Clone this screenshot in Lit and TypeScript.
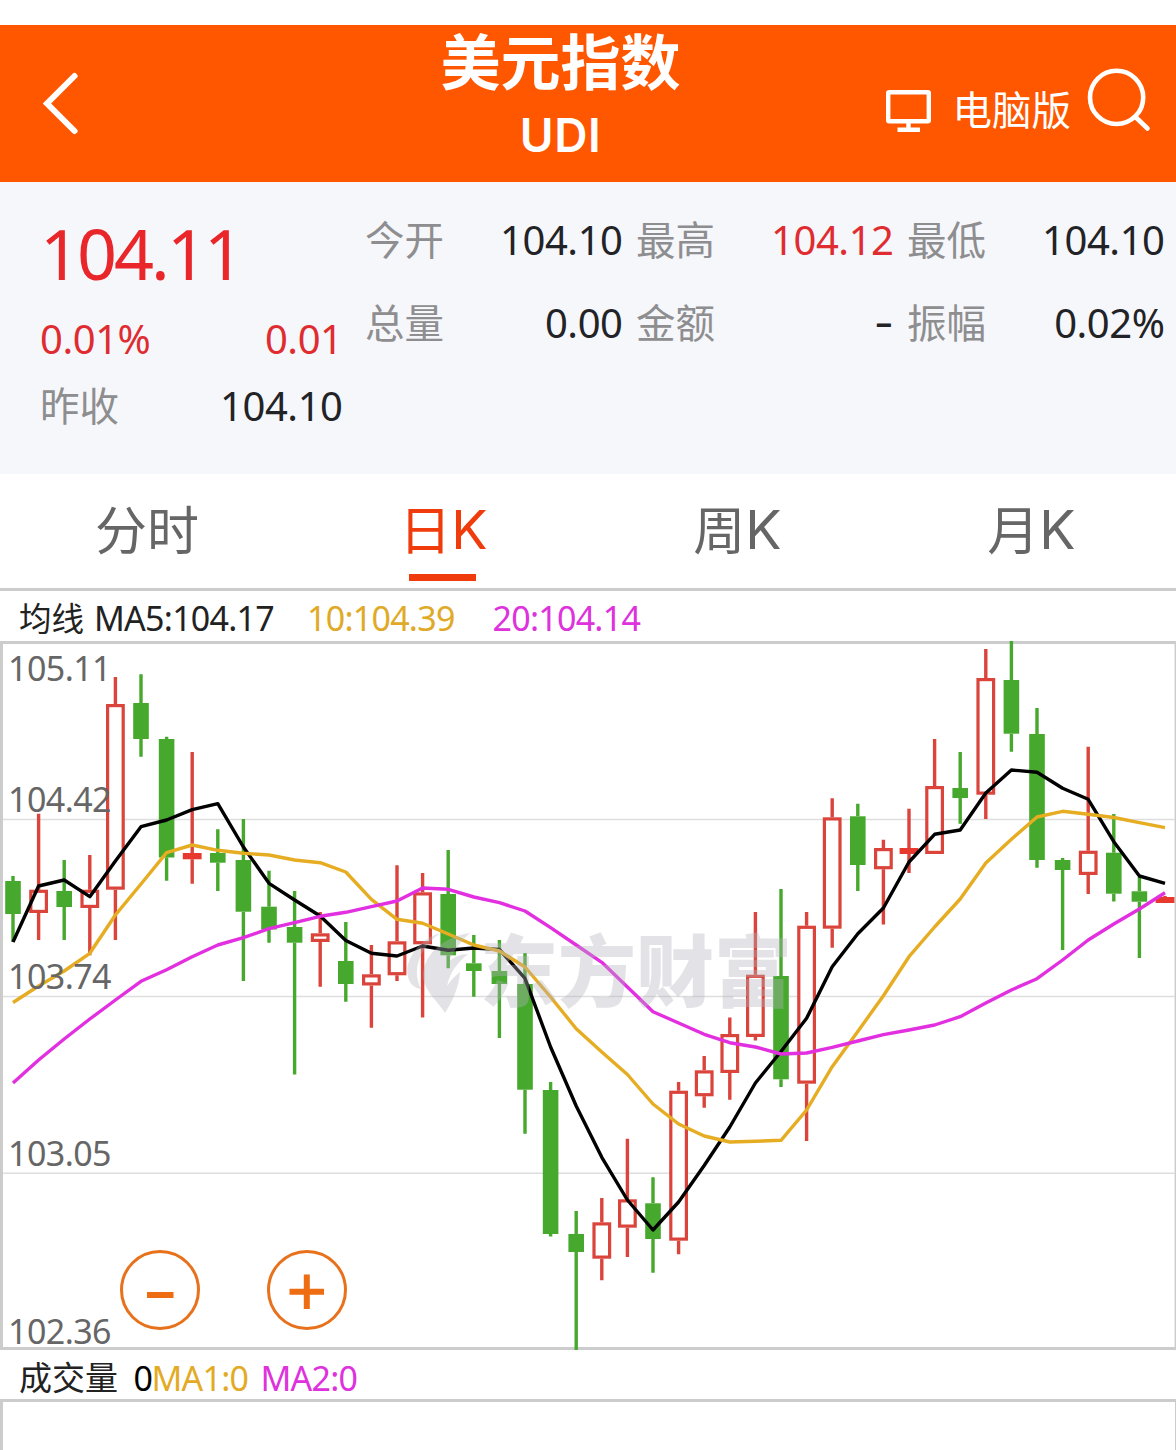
import { LitElement, html, svg, css } from "lit";
import { customElement } from "lit/decorators.js";

type Candle = [kind: "up" | "down" | "flat", high: number, top: number, bottom: number, low: number];

const X0 = 13;
const STEP = 25.6;
const cx = (i: number) => X0 + STEP * i;

const candles: Candle[] = [
  ["down", 876, 881, 914, 942], ["up", 813.7, 889.7, 913, 940], ["down", 860, 891, 907, 940],
  ["up", 855, 889.7, 908, 955.3], ["up", 677, 704, 889.7, 940], ["down", 674.3, 703, 739, 756.7],
  ["down", 736.7, 739, 857.5, 880.7], ["flat", 752, 853, 859.3, 883.7], ["down", 829.3, 853, 862.7, 891],
  ["down", 819, 860, 911.7, 981], ["down", 870.7, 906.7, 929.5, 942.7], ["down", 891, 927, 942.7, 1074.5],
  ["up", 912, 933.3, 942, 986.7], ["down", 922, 961, 984, 1001.7], ["up", 945, 974.3, 985.5, 1027.7],
  ["up", 865.3, 941.3, 975.3, 981], ["up", 873, 892.3, 944.3, 1017.5], ["down", 850, 894, 955.3, 968.3],
  ["down", 935, 963.3, 971, 996.7], ["down", 940, 971, 984, 1038], ["down", 953, 984, 1089.7, 1133.7],
  ["down", 1082, 1090, 1234, 1236.5], ["down", 1211, 1234, 1252, 1350], ["up", 1198, 1222.3, 1258.7, 1280.3],
  ["up", 1138.7, 1199.3, 1227.7, 1257], ["down", 1177.3, 1203.3, 1239, 1272.7], ["up", 1082, 1090.7, 1240.7, 1254.3],
  ["up", 1056, 1070.3, 1096.3, 1107.7], ["up", 1017.5, 1034, 1073, 1099.7], ["up", 912, 974.7, 1037, 1040.5],
  ["down", 889, 976, 1079.3, 1087], ["up", 912, 925.7, 1083.7, 1141], ["up", 798.3, 817.3, 928.7, 947.7],
  ["down", 803.7, 816.3, 865, 891], ["up", 839.7, 848, 869.3, 924.5], ["flat", 808.7, 848, 854, 873],
  ["up", 739, 786, 854, 854], ["down", 752, 788, 798, 823.7], ["up", 649, 678, 794.7, 819],
  ["down", 641, 680, 733.7, 751.7], ["down", 708, 734, 860, 867.7], ["down", 858, 860, 870, 950],
  ["up", 746.7, 850.7, 875, 894], ["down", 814, 852.7, 893.7, 901.5], ["down", 876.7, 891.3, 901.7, 958],
  ["flat", 896, 897, 903, 903],
];

const ma5 = [
  942, 886, 880, 896.7, 861, 826.7, 820, 809.7, 803.7, 847, 883.3, 900, 916, 940.5, 953.3, 956, 946, 950.3, 948,
  949.5, 978.3, 1047, 1106, 1157.3, 1200, 1230, 1202, 1165.5, 1127, 1083, 1051.5, 1018.3, 966.7, 933.7, 908, 862,
  834.3, 830, 793, 770, 772.3, 788.3, 799.3, 841.7, 876, 883.3,
];
const ma10 = [
  1002.5, 986, 971, 953.3, 915, 884, 852.7, 845, 850.3, 853.3, 855, 860, 862.7, 872, 899.3, 919.3, 923.3, 934, 945,
  951, 967, 997, 1028.7, 1052, 1074.5, 1104, 1124, 1136, 1142, 1141.3, 1140.3, 1110, 1066.7, 1031.5, 995.7, 956.7,
  927, 899, 863, 839.3, 817, 811.3, 814.3, 817.5, 822.7, 827.7,
];
const ma20 = [
  1083, 1060, 1039, 1019, 1000, 981.3, 969.7, 956.7, 945, 937.7, 928.7, 922.7, 916.3, 912.3, 906.7, 901, 888, 889.3,
  897, 902.7, 911, 927.7, 945, 962.3, 987, 1011.7, 1023, 1034.3, 1042.7, 1047, 1054, 1053, 1047.3, 1041, 1034.7,
  1030, 1025, 1016.7, 1003, 990, 978.7, 960, 940, 924, 909, 892.7,
];

const line = (ys: number[]) => ys.map((y, i) => `${cx(i).toFixed(1)},${y}`).join(" ");

const baseText = css`
  :host {
    display: block;
    font-family: "Noto Sans", "Noto Sans CJK SC", sans-serif;
  }
`;

@customElement("quote-header")
class QuoteHeader extends LitElement {
  static styles = [
    baseText,
    css`
      .bar {
        box-sizing: border-box;
        height: 157px;
        display: grid;
        grid-template-columns: 420px 281px 1fr;
        background: #ff5700;
        color: #fff;
      }
      .back { padding: 46px 0 0 40px; }
      .title { display: flex; flex-direction: column; align-items: center; gap: 7px; padding-top: 1px; }
      .name { font: 700 60px/72px "Noto Sans", "Noto Sans CJK SC", sans-serif; }
      .code { font: 600 46px/60px Inter, "Noto Sans", sans-serif; letter-spacing: 0.6px; }
      .tools { display: flex; align-items: flex-start; }
      .monitor { margin: 63px 0 0 183px; }
      .pc { margin: 55px 0 0 18.5px; font-size: 39.5px; line-height: 60px; white-space: nowrap; }
      .search { margin: 41px 0 0 13.5px; }
      svg { display: block; flex: none; fill: none; stroke: #fff; }
    `,
  ];
  render() {
    return html`<div class="bar">
      <div class="back">
        <svg width="42" height="66" viewBox="40 71 42 66" stroke-width="6" stroke-linecap="round" stroke-linejoin="miter">
          <path d="M74.5 76 47 103.5 74.5 131" />
        </svg>
      </div>
      <div class="title"><div class="name">美元指数</div><div class="code">UDI</div></div>
      <div class="tools">
        <svg class="monitor" width="50" height="46" viewBox="884 88 50 46" stroke-width="4.4">
          <rect x="888.2" y="92.2" width="40.6" height="29" rx="1" />
          <path d="M908.5 123v6M897.5 129.8h22.5" />
        </svg>
        <span class="pc">电脑版</span>
        <svg class="search" width="68" height="68" viewBox="1085 66 68 68" stroke-width="4.6" stroke-linecap="round">
          <circle cx="1116.6" cy="97.4" r="26.6" />
          <path d="M1135.5 117 1147.5 128.5" />
        </svg>
      </div>
    </div>`;
  }
}

@customElement("quote-summary")
class QuoteSummary extends LitElement {
  static styles = [
    baseText,
    css`
      .panel { box-sizing: border-box; height: 292px; display: flex; background: #f6f7fb; color: #222326; font-size: 40px; line-height: 60px; letter-spacing: -0.45px; }
      .main { width: 302.5px; margin-left: 40px; padding-top: 26px; }
      .last { font-size: 70px; line-height: 90px; letter-spacing: -3px; margin-bottom: 10.5px; color: #e9262a; }
      .row { display: flex; justify-content: space-between; margin-bottom: 7.5px; }
      .grid {
        margin-left: 22.5px; padding-top: 27.5px; display: grid; align-content: start;
        grid-template-columns: repeat(3, 257.5px); grid-auto-rows: 83px; column-gap: 13.5px;
      }
      .cell { display: flex; justify-content: space-between; }
      .label { color: #8e8e90; font-size: 39.5px; letter-spacing: 0; }
      .rise { color: #df2c30; }
      .none { font-family: Inter, sans-serif; font-size: 44px; }
    `,
  ];
  private cells = [
    ["今开", "104.10", ""], ["最高", "104.12", "rise"], ["最低", "104.10", ""],
    ["总量", "0.00", ""], ["金额", "-", "none"], ["振幅", "0.02%", ""],
  ];
  render() {
    return html`<div class="panel">
      <div class="main">
        <div class="last">104.11</div>
        <div class="row rise"><span>0.01%</span><span>0.01</span></div>
        <div class="row"><span class="label">昨收</span><span>104.10</span></div>
      </div>
      <div class="grid">
        ${this.cells.map(([l, v, c]) => html`<div class="cell"><span class="label">${l}</span><span class=${c}>${v}</span></div>`)}
      </div>
    </div>`;
  }
}

@customElement("period-tabs")
class PeriodTabs extends LitElement {
  static styles = [
    baseText,
    css`
      .tabs { display: grid; grid-template-columns: repeat(4, 1fr); height: 114px; border-bottom: 3px solid #ccc; color: #666; }
      .tab { display: flex; flex-direction: column; align-items: center; padding-top: 11px; font-size: 52px; line-height: 89px; }
      .name { display: flex; white-space: nowrap; }
      .k { font-family: Inter, "Noto Sans", sans-serif; font-size: 54px; margin-right: -5px; }
      .on { color: #f03c0c; }
      .mark { width: 67px; height: 7px; margin-left: 2px; background: #f03c0c; }
    `,
  ];
  render() {
    return html`<div class="tabs">
      ${["分时", "日", "周", "月"].map(
        (t, i) => html`<div class=${i === 1 ? "tab on" : "tab"}>
          <div class="name"><span>${t}</span>${i ? html`<span class="k">K</span>` : ""}</div>
          ${i === 1 ? html`<div class="mark"></div>` : ""}
        </div>`
      )}
    </div>`;
  }
}

@customElement("kline-chart")
class KlineChart extends LitElement {
  static styles = [
    baseText,
    css`
      .chart { display: block; overflow: visible; }
      .edge { fill: #ccc; }
      .grid { stroke: #dedede; stroke-width: 1.6; }
      .up { stroke: #db443b; fill: #fff; }
      .flat { stroke: #db443b; fill: #e8392f; }
      .down { stroke: #46a92d; fill: #46a92d; }
      .wick { stroke-width: 3.4; }
      .box { stroke-width: 3.2; }
      .solid { stroke: none; }
      .ma { fill: none; stroke-width: 3.4; stroke-linejoin: round; }
      .ma5 { stroke: #000; }
      .ma10 { stroke: #e6ac22; }
      .ma20 { stroke: #e22fe0; }
      .axis { fill: #666; font-size: 34px; }
      .water { fill: #b4b4be; opacity: 0.36; }
      .brand { font: 900 78px "Noto Sans CJK SC", sans-serif; }
      .zoom { fill: none; stroke: #e8711c; stroke-width: 3; }
      .sign { stroke: #ee6c12; stroke-width: 6; }
    `,
  ];
  private candle([kind, high, top, bottom, low]: Candle, i: number) {
    const x = cx(i);
    return svg`<g class=${kind}>
      <path class="wick" d="M${x} ${high}V${top}M${x} ${bottom}V${low}" />
      ${kind === "up"
        ? svg`<rect class="box" x=${x - 7.8} y=${top + 1.6} width="15.6" height=${bottom - top - 3.2} />`
        : kind === "flat"
          ? svg`<rect class="solid" x=${x - 9.4} y=${top} width="18.8" height=${bottom - top} />`
          : svg`<rect class="solid" x=${x - 7.8} y=${top} width="15.6" height=${bottom - top} />`}
    </g>`;
  }
  render() {
    const axis: [string, number][] = [
      ["105.11", 681], ["104.42", 812], ["103.74", 989], ["103.05", 1166], ["102.36", 1344],
    ];
    return html`<svg class="chart" width="1176" height="709" viewBox="0 641 1176 709">
      <path class="edge" d="M0 641H1176V644H0zM0 1347H1176V1350H0zM0 641H3V1350H0zM1174.6 641H1176V1350H1174.6z" />
      <path class="grid" d="M3 819.5H1175M3 996.5H1175M3 1173.3H1175" />
      ${candles.map((c, i) => this.candle(c, i))}
      <polyline class="ma ma5" points=${line(ma5)} />
      <polyline class="ma ma10" points=${line(ma10)} />
      <polyline class="ma ma20" points=${line(ma20)} />
      ${axis.map(([t, y]) => svg`<text class="axis" x="8" y=${y} textLength="103.5">${t}</text>`)}
      <g class="water">
        <path d="M440 933C418 940 402 962 409 980C411 985 415 988 421 989C411 970 420 948 440 933Z" />
        <path d="M470 933C444 936 418 958 424 982C428 994 438 1002 445 1013C452 1002 459 988 460 972C455 976 451 980 447 986C450 972 458 962 468 954C460 954 455 957 449 961C454 950 462 940 470 933Z" />
        <text class="brand" x="480" y="1001" textLength="312" lengthAdjust="spacingAndGlyphs">东方财富</text>
      </g>
      <circle class="zoom" cx="160" cy="1290" r="38.5" />
      <circle class="zoom" cx="307" cy="1290" r="38.5" />
      <path class="sign" d="M147 1295H173.5M289.5 1291.7H324M306.8 1274.5V1309" />
    </svg>`;
  }
}

@customElement("app-root")
class AppRoot extends LitElement {
  static styles = [
    baseText,
    css`
      :host { height: 1450px; overflow: hidden; background: #fff; padding-top: 25px; box-sizing: border-box; }
      .legend { display: flex; height: 50px; padding-left: 19px; font-size: 34px; line-height: 55px; white-space: pre; letter-spacing: -0.75px; color: #222; }
      .cn { font-size: 32.5px; letter-spacing: 0; }
      .m5 { width: 213px; margin-left: 10px; }
      .m10 { width: 185.5px; color: #e0aa28; }
      .m20 { color: #dd32dc; }
      .vol { height: 49px; line-height: 56px; }
      .vol .cn { font-size: 33px; }
      .zero { color: #000; width: 18px; margin-left: 15.5px; }
      .v1 { width: 109px; color: #e3ab25; }
      .volume { height: 60px; border: 3px solid #ccc; border-right-width: 1px; border-bottom: 0; }
    `,
  ];
  render() {
    return html`
      <quote-header></quote-header>
      <quote-summary></quote-summary>
      <period-tabs></period-tabs>
      <div class="legend">
        <span class="cn">均线</span><span class="m5">MA5:104.17</span><span class="m10">10:104.39</span><span class="m20">20:104.14</span>
      </div>
      <kline-chart></kline-chart>
      <div class="legend vol">
        <span class="cn">成交量</span><span class="zero">0</span><span class="v1">MA1:0</span><span class="m20">MA2:0</span>
      </div>
      <div class="volume"></div>
    `;
  }
}
